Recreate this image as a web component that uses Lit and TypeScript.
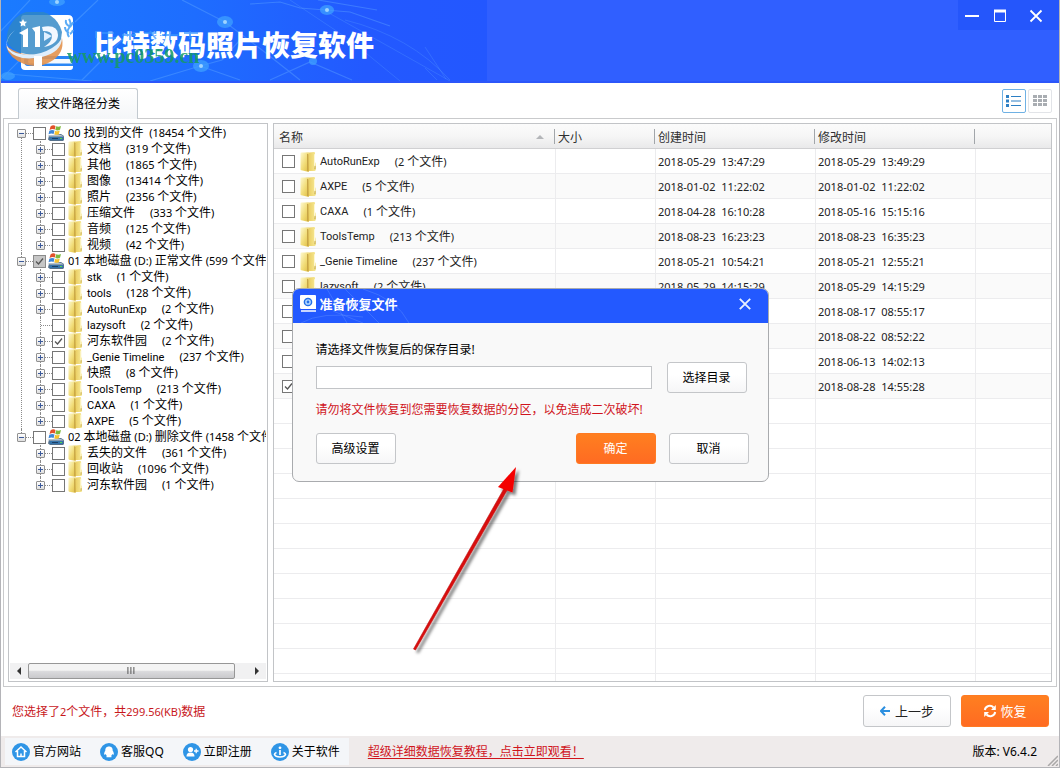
import { LitElement, html, svg, css } from "lit";
import { customElement, state } from "lit/decorators.js";
import { classMap } from "lit/directives/class-map.js";

interface TreeNode {
  name: string;
  count: string;
  checked?: boolean;
  leaf?: boolean;
}
interface TreeRoot {
  label: string;
  partial?: boolean;
  children: TreeNode[];
}
interface FileRow {
  name: string;
  count: string;
  created: string;
  modified: string;
  checked?: boolean;
}

const TREE: TreeRoot[] = [
  {
    label: "00 找到的文件  (18454 个文件)",
    children: [
      { name: "文档", count: "319" },
      { name: "其他", count: "1865" },
      { name: "图像", count: "13414" },
      { name: "照片", count: "2356" },
      { name: "压缩文件", count: "333" },
      { name: "音频", count: "125" },
      { name: "视频", count: "42" },
    ],
  },
  {
    label: "01 本地磁盘 (D:) 正常文件 (599 个文件)",
    partial: true,
    children: [
      { name: "stk", count: "1" },
      { name: "tools", count: "128" },
      { name: "AutoRunExp", count: "2" },
      { name: "lazysoft", count: "2", leaf: true },
      { name: "河东软件园", count: "2", checked: true },
      { name: "_Genie Timeline", count: "237" },
      { name: "快照", count: "8" },
      { name: "ToolsTemp", count: "213" },
      { name: "CAXA", count: "1" },
      { name: "AXPE", count: "5" },
    ],
  },
  {
    label: "02 本地磁盘 (D:) 删除文件 (1458 个文件)",
    children: [
      { name: "丢失的文件", count: "361" },
      { name: "回收站", count: "1096" },
      { name: "河东软件园", count: "1" },
    ],
  },
];

const ROWS: FileRow[] = [
  { name: "AutoRunExp", count: "2", created: "2018-05-29  13:47:29", modified: "2018-05-29  13:49:29" },
  { name: "AXPE", count: "5", created: "2018-01-02  11:22:02", modified: "2018-01-02  11:22:02" },
  { name: "CAXA", count: "1", created: "2018-04-28  16:10:28", modified: "2018-05-16  15:15:16" },
  { name: "ToolsTemp", count: "213", created: "2018-08-23  16:23:23", modified: "2018-08-23  16:35:23" },
  { name: "_Genie Timeline", count: "237", created: "2018-05-21  10:54:21", modified: "2018-05-21  12:55:21" },
  { name: "lazysoft", count: "2", created: "2018-05-29  14:15:29", modified: "2018-05-29  14:15:29" },
  { name: "stk", count: "1", created: "2018-08-17  08:55:17", modified: "2018-08-17  08:55:17" },
  { name: "tools", count: "128", created: "2018-08-22  08:52:22", modified: "2018-08-22  08:52:22" },
  { name: "快照", count: "8", created: "2018-06-13  14:02:13", modified: "2018-06-13  14:02:13" },
  { name: "河东软件园", count: "2", created: "2018-08-28  14:55:28", modified: "2018-08-28  14:55:28", checked: true },
];

const BLANK_ROWS = Array.from({ length: 12 });

/** Latin runs are set one pixel smaller than the Han characters around them. */
const mix = (text: string) =>
  text
    .split(/([\u3000-\u9fff\uff00-\uffef]+)/)
    .filter(Boolean)
    .map((run) => (/[\u3000-\uffef]/.test(run) ? run : html`<span class="latin">${run}</span>`));

const folder = html`<svg class="folder" viewBox="0 0 16 18" preserveAspectRatio="none" aria-hidden="true">
  <defs>
    <linearGradient id="fa" x1="0" x2="1" y1="0" y2="1">
      <stop offset="0" stop-color="#fdf8cf" /><stop offset=".5" stop-color="#f2de7c" /><stop offset="1" stop-color="#dfbb3e" />
    </linearGradient>
    <linearGradient id="fb" x1="0" x2="1">
      <stop offset="0" stop-color="#c9a63c" /><stop offset=".4" stop-color="#ecd168" /><stop offset="1" stop-color="#f7e995" />
    </linearGradient>
  </defs>
  <path d="M5 1 14 0q1 0 1 1v8l.8 1.500V16q0 1-1 1H6z" fill="url(#fb)" />
  <path d="M14.500 2v12" stroke="#fffbe0" stroke-width=".8" />
  <path d="M15 12.500v3" stroke="#b8952f" stroke-width=".8" />
  <path d="M.5 1.500q0-1 1-1H8q1 0 1 1V17q0 1-1 .8L1.300 16.500q-.8-.2-.8-1z" fill="url(#fa)" />
  <path d="M7 1.500q1.500 0 1.500 1V17.500L7 17z" fill="#c7a546" />
</svg>`;

const drive = html`<svg class="drive" viewBox="0 0 16 16" aria-hidden="true">
  <path d="M1 10.500 13 9l3 2v4l-1 1H2L0 14.500z" fill="#56718c" />
  <path d="M0 10h13l3 1.500H1.500z" fill="#b4c3cf" />
  <path d="M1.500 12H15v3H2z" fill="#3574ab" />
  <path d="M4 13h6v1H4z" fill="#1c3f66" /><path d="M12 13h2v1h-2z" fill="#58d84a" />
  <path d="M2.500 1.500Q5-.5 7.500 1L6.800 4.500Q4.500 3.300 1.500 5z" fill="#e2512a" />
  <path d="M8.200 1.300Q10.500 2.400 13 1L12 4.700Q9.500 6 7.300 4.800z" fill="#7fb93c" />
  <path d="M1.300 5.800Q4 4.300 6.500 5.500L5.600 9Q3.500 8 .5 9.200z" fill="#3d86d8" />
  <path d="M7.200 5.700Q9.500 6.800 11.800 5.600L10.800 9.200Q8.500 10.300 6.300 9.200z" fill="#f6c22e" />
</svg>`;

@customElement("app-root")
export class AppRoot extends LitElement {
  @state() private view: "list" | "grid" = "list";

  static styles = css`
    :host {
      display: flex;
      flex-direction: column;
      position: relative;
      box-sizing: border-box;
      height: 100vh;
      overflow: hidden;
      border: 1px solid #b4b4b8;
      border-top: 0;
      background: #fff;
      color: #000;
      font: 12px/16px "Noto Sans", "Noto Sans CJK SC", sans-serif;
    }
    *, *::before, *::after { box-sizing: border-box; }
    button, input { font: inherit; color: inherit; margin: 0; padding: 0; }
    button { cursor: pointer; }
    .latin { font-size: 11px; }
    .name { font-family: Roboto, "Noto Sans CJK SC", sans-serif; }

    .banner {
      flex: none;
      display: flex;
      justify-content: space-between;
      height: 83px;
      background: #305fff;
      border-bottom: 2px solid #2c56fa;
      margin: 0 -1px;
    }
    .brand {
      position: relative;
      display: flex;
      align-items: center;
      width: 487px;
      padding: 6px 0 0 94px;
      background: linear-gradient(90deg, #1a7bff 0, #1e6dff 40%, #2359ff 75%, #2357ff 100%);
    }
    .brand h1 {
      position: relative;
      margin: 0;
      color: #fff;
      font: 900 28px/32px "Noto Sans CJK SC", sans-serif;
      white-space: nowrap;
    }
    .circuit { position: absolute; inset: 0; width: 100%; height: 100%; }
    .mark { position: absolute; left: 4px; top: 12px; width: 220px; height: 60px; }
    .site {
      position: absolute;
      left: 67px;
      top: 46px;
      color: #169a64;
      font: bold 20px/20px "Liberation Serif", serif;
      opacity: 0.85;
    }
    .window-controls {
      display: flex;
      height: 30px;
      padding: 1px 10px 0 0;
      background: #2556fb;
    }
    .window-controls button { width: 28px; border: 0; background: none; }
    .window-controls button:last-child { width: 36px; padding-left: 8px; }
    .window-controls svg { display: block; margin: auto; }

    .tabs {
      flex: none;
      display: flex;
      justify-content: space-between;
      align-items: flex-end;
      height: 35px;
      padding: 0 7px 0 17px;
    }
    .tab {
      position: relative;
      z-index: 1;
      height: 31px;
      margin-bottom: -1px;
      width: 120px;
      border: 1px solid #c3cad0;
      border-bottom: 0;
      border-radius: 3px 3px 0 0;
      background: linear-gradient(#fff, #f4f6f8);
    }
    .views { display: flex; gap: 2px; padding-bottom: 5px; }
    .views button {
      display: grid;
      place-items: center;
      width: 24px;
      height: 24px;
      border: 1px solid #e2e4e8;
      border-radius: 2px;
      background: #fff;
    }
    .views button.active { border-color: #6fb1e4; }
    .views svg { display: block; }

    .panel {
      flex: 1;
      min-height: 0;
      display: flex;
      gap: 5px;
      margin: 0 2px;
      padding: 4px;
      border: 1px solid #c9cacc;
    }
    .tree-box {
      flex: none;
      width: 260px;
      display: flex;
      flex-direction: column;
      border: 1px solid #c2c4c7;
      padding: 1px;
    }
    .tree { flex: 1; min-height: 0; overflow: hidden; margin: 0; padding: 0 0 0 7px; list-style: none; }
    .tree ul { margin: 0; padding: 0 0 0 19px; list-style: none; }
    .tree li { position: relative; }
    .tree li::before {
      content: "";
      position: absolute;
      left: 4px;
      top: 0;
      bottom: 0;
      border-left: 1px dotted #8b8b8b;
    }
    .tree > li:first-child::before { top: 8px; }
    .tree li:last-child::before { bottom: auto; height: 8px; }
    .node {
      position: relative;
      display: flex;
      align-items: center;
      height: 16px;
      white-space: pre;
    }
    .node::before {
      content: "";
      position: absolute;
      left: 5px;
      top: 8px;
      width: 11px;
      border-top: 1px dotted #8b8b8b;
    }
    .node label { display: flex; align-items: center; white-space: pre; }
    .twist {
      position: relative;
      flex: none;
      width: 9px;
      height: 9px;
      border: 1px solid #919191;
      border-radius: 1px;
      background:
        linear-gradient(#3c5a9a, #3c5a9a) center / 5px 1px no-repeat,
        linear-gradient(#fff, #dfdfdf);
      margin-right: 7px;
    }
    .twist.closed {
      background:
        linear-gradient(#3c5a9a, #3c5a9a) center / 5px 1px no-repeat,
        linear-gradient(#3c5a9a, #3c5a9a) center / 1px 5px no-repeat,
        linear-gradient(#fff, #dfdfdf);
    }
    .twist.none { visibility: hidden; }
    .check {
      appearance: none;
      flex: none;
      width: 13px;
      height: 13px;
      border: 1px solid #767676;
      background: #fff;
    }
    .check:checked, .check.partial {
      background: #fff url("data:image/svg+xml,%3Csvg xmlns='http://www.w3.org/2000/svg' viewBox='0 0 11 11'%3E%3Cpath d='M2 5.500 4.500 8 9 2.500' fill='none' stroke='%23555' stroke-width='1.3'/%3E%3C/svg%3E") center / 11px 11px no-repeat;
    }
    .check.partial { background-color: #c6c6c6; border-color: #8b8b8b; }
    .drive { width: 16px; height: 16px; margin: 0 4px 0 2px; }
    .folder { flex: none; width: 14px; height: 16px; margin: 0 5px 0 3px; }
    .count { margin-left: 15px; }

    .hscroll {
      flex: none;
      display: flex;
      height: 16px;
      background: #f1f1f2;
      margin-bottom: 1px;
    }
    .hscroll button { border: 0; background: none; width: 18px; display: grid; place-items: center; }
    .hscroll .thumb-track { flex: 1; display: flex; }
    .hscroll .thumb {
      width: 94%;
      border: 1px solid #979797;
      border-radius: 2px;
      background: linear-gradient(#f4f4f4 0 45%, #dcdcde 50%, #c9c9cc);
    }

    .list-box { flex: 1; min-width: 0; overflow: hidden; border: 1px solid #c2c4c7; }
    table { width: 100%; border-collapse: separate; border-spacing: 0; table-layout: fixed; color: #222; }
    .c-name { width: 282px; }
    .c-size { width: 100px; }
    .c-date { width: 160px; }
    th {
      position: relative;
      height: 25px;
      padding: 4px 2px 0;
      text-align: left;
      font-weight: 400;
      color: #303030;
      background: linear-gradient(#fbfbfb, #f6f6f6 50%, #e9e9ea);
      border-bottom: 1px solid #d0d0d2;
    }
    th:first-child { padding-left: 5px; }
    th:not(:last-child)::after {
      content: "";
      position: absolute;
      right: 1px;
      top: 5px;
      height: 15px;
      border-right: 1px solid #a2a6aa;
    }
    .sort {
      position: absolute;
      right: 12px;
      top: 11px;
      border: 4px solid transparent;
      border-top: 0;
      border-bottom-color: #b4b6b9;
    }
    td {
      height: 25px;
      padding: 1px 2px 0;
      white-space: pre;
      border-bottom: 1px solid #ececee;
      border-right: 1px solid #ececee;
    }
    td:last-child { border-right: 0; }
    .shaded td { background: #fafafa; }
    .file { display: flex; align-items: center; padding-left: 6px; }
    .file .folder { width: 16px; height: 20px; margin: 0 4px 0 5px; }

    .actions {
      flex: none;
      display: flex;
      align-items: flex-start;
      gap: 10px;
      height: 49px;
      padding: 8px 10px 0 11px;
    }
    .picked { flex: 1; margin: 0; padding-top: 9px; color: #c8171c; }
    .btn {
      display: flex;
      align-items: center;
      justify-content: center;
      height: 31px;
      width: 80px;
      padding-top: 2px;
      border: 1px solid #c4c6c9;
      border-radius: 3px;
      background: linear-gradient(#fff, #fff 40%, #f6f6f7);
    }
    .primary { border-color: #ff7a22; background: linear-gradient(#ff7f20, #ff6b22); color: #fff; }
    .actions .btn { width: 88px; height: 32px; padding-top: 0; gap: 5px; font-size: 13px; color: #222; }
    .actions .primary { color: #fff; gap: 3px; }

    .status {
      flex: none;
      display: flex;
      align-items: center;
      height: 31px;
      padding: 0 22px 0 4px;
      background: #efebeb;
      position: relative;
    }
    .links {
      display: flex;
      align-items: center;
      gap: 19px;
      height: 27px;
      padding: 0 9px 0 7px;
      background: #f4f6f9;
      margin-right: 19px;
    }
    .links a { display: flex; align-items: center; gap: 3px; color: #000; text-decoration: none; }
    .links svg { width: 18px; height: 18px; }
    .promo { color: #d0141c; text-decoration: underline; text-underline-offset: 2px; }
    .version { margin-left: auto; }
    .grip { position: absolute; right: 1px; bottom: 1px; }

    .overlay { position: absolute; inset: 0; display: grid; place-items: center; pointer-events: none; padding-top: 2px; }
    .dialog {
      pointer-events: auto;
      width: 477px;
      border: 1px solid #a9abae;
      border-radius: 7px;
      background: #f9f9f9;
      overflow: hidden;
    }
    .dialog-head {
      position: relative;
      display: flex;
      align-items: center;
      gap: 3px;
      height: 34px;
      padding: 0 14px 4px 7px;
      background: #2359ff;
      color: #fff;
    }
    .dialog-head h2 { flex: 1; margin: 0; font: 700 13px/16px "Noto Sans CJK SC", sans-serif; }
    .dialog-head button { display: grid; place-items: center; width: 18px; height: 18px; border: 0; background: none; }
    .dialog-head .webbing { position: absolute; left: 0; top: 0; }
    .dialog-body { padding: 19px 19px 17px 23px; }
    .field { display: flex; align-items: center; gap: 15px; padding-right: 2px; margin: 4px 0 9px; }
    .field input { flex: 1; min-width: 0; height: 23px; border: 1px solid #c2c4c7; background: #fff; padding: 0 4px; }
    .ask { display: block; }
    .warn { margin: 0 0 15px; color: #d0141c; }
    .buttons { display: flex; gap: 13px; }
    .buttons .btn:first-child { margin-right: auto; }
    .pointer { position: absolute; left: 404px; top: 460px; width: 125px; height: 200px; pointer-events: none; }
  `;

  private banner() {
    return html`<header class="banner">
      <div class="brand">
        <svg class="circuit" viewBox="0 0 487 81" preserveAspectRatio="none" aria-hidden="true">
          <g fill="none" stroke="#6db4ff" stroke-opacity=".35" stroke-width="1.200">
            <path d="M0 32 30 0M0 80 28 52M8 74 92 81M82 80 130 32 150 34M75 22 98 0M182 0 225 22 262 50 300 80M250 4 280 2 300 8 350 12 390 26M318 0 377 10M150 81 200 66 222 60 240 40M200 66 240 80M270 80 310 62 352 80" />
          </g>
          <path d="M290 0 350 40 400 81M320 8 395 50 450 81M345 20Q410 36 450 80M425 47 446 79M425 68 437 80" fill="none" stroke="#6db4ff" stroke-opacity=".22" />
          <g fill="#3fa0ff" fill-opacity=".75">
            <ellipse cx="57" cy="2" rx="8" ry="4" /><ellipse cx="225" cy="22" rx="8" ry="6" />
            <ellipse cx="327" cy="10" rx="7" ry="5" /><ellipse cx="201" cy="66" rx="8" ry="6" />
            <ellipse cx="8" cy="76" rx="7" ry="4" /><circle cx="313" cy="61" r="4" />
          </g>
          <g fill="#9ed4ff"><circle cx="57" cy="2" r="2" /><circle cx="225" cy="22" r="2" /><circle cx="327" cy="10" r="2" /><circle cx="201" cy="66" r="2" /></g>
        </svg>
        <h1>比特数码照片恢复软件</h1>
        <svg class="mark" viewBox="0 0 220 60" aria-hidden="true">
          <path d="M20 3h44q5 0 5 5v47q0 3-3 3H21q-4 0-4-4V7q0-4 3-4z" fill="#fff" />
          <path d="M22 44h47v10H24q-4 0-4-5t4-5z" fill="#2a86f5" />
          <path d="M25 47h43v4.500H25q-2-2 0-4.500z" fill="#f4f9ff" />
          <path d="M65 7q3 5 0 9t0 9M62 8q-1 4 3 6M61 15q0 4 4 6M69 10q-1 3-3 5M69 18q-1 3-3 4" stroke="#5cacf6" stroke-width="2" fill="none" />
          <path d="M3 30A28 28 0 0 1 58 20L56 34Q44 42 30 43 10 42 3 30z" fill="#2f86c4" fill-opacity=".82" />
          <path d="M2 34Q20 46 36 42 53 37 58 26 61 42 46 50 34 57 20 52 5 46 2 34z" fill="#e3924e" fill-opacity=".9" />
          <path d="M11 18Q-6 34 12 41 32 46 48 36 56 31 58 25 58 40 38 45 14 50 4 38-1 28 11 18z" fill="#dfeefc" />
          <path d="M15 21l9-5v19h-5V23zM28 16l8-2v21h-5V20zM30 44h8v12h-8z" fill="#fff" />
          <path d="M38 15q16-3 16 8 0 9-14 12 8-5 8-11 0-5-9-5z" fill="#f3f8ff" />
          <path d="M40 20l8 4-8 5z" fill="#dff0ff" />
          <path d="M19 7l1.200 2.500 2.800.3-2 2 .5 2.700-2.500-1.300-2.500 1.300.5-2.700-2-2 2.800-.3z" fill="#fff" />
          <path d="M92 19v7M98 21h12M104 26h8M118 23h14M126 19v9M140 21h12M146 19l6 8M158 23h16M166 19v9M180 21h14M186 19v8" stroke="#3796ff" stroke-width="2" opacity=".7" fill="none" />
        </svg>
        <span class="site">www.pc0359.cn</span>
      </div>
      <div class="window-controls">
        <button aria-label="最小化"><svg width="14" height="14"><path d="M0 7h14" stroke="#fff" stroke-width="2" /></svg></button>
        <button aria-label="最大化"><svg width="14" height="14"><path d="M1.500 1.500h11v11h-11z" fill="none" stroke="#fff" /><path d="M1 2h12" stroke="#fff" stroke-width="3" /></svg></button>
        <button aria-label="关闭"><svg width="14" height="14"><path d="M1.500 1.500l11 11m0-11l-11 11" stroke="#fff" stroke-width="1.800" /></svg></button>
      </div>
    </header>`;
  }

  private tabs() {
    return html`<nav class="tabs">
      <button class="tab">按文件路径分类</button>
      <div class="views">
        <button class=${classMap({ active: this.view === "list" })} aria-label="列表" @click=${() => (this.view = "list")}>
          <svg width="16" height="12"><path d="M0 0h3v3H0zM0 4.500h3v3H0zM0 9h3v3H0z" fill="#2c7fc4" /><path d="M5 1.500h10M5 6h10M5 10.500h10" stroke="#2c7fc4" /></svg>
        </button>
        <button class=${classMap({ active: this.view === "grid" })} aria-label="图标" @click=${() => (this.view = "grid")}>
          <svg width="14" height="12">${[0, 5, 10].map((x) => [0, 4, 8].map((y) => svg`<path d="M${x} ${y}h4v3h-4z" fill="#a9adb2" />`))}</svg>
        </button>
      </div>
    </nav>`;
  }

  private tree() {
    return html`<section class="tree-box">
      <ul class="tree">
        ${TREE.map(
          (root) => html`<li>
            <div class="node">
              <button class="twist" aria-label="折叠"></button>
              <label><input type="checkbox" class=${classMap({ check: true, partial: !!root.partial })} />${drive}<span>${mix(root.label)}</span></label>
            </div>
            <ul>
              ${root.children.map(
                (n) => html`<li>
                  <div class="node">
                    <button class=${classMap({ twist: true, closed: true, none: !!n.leaf })} aria-label="展开"></button>
                    <label><input type="checkbox" class="check" .checked=${!!n.checked} />${folder}<span class="name">${mix(n.name)}</span><span class="count">${mix(`(${n.count} 个文件)`)}</span></label>
                  </div>
                </li>`
              )}
            </ul>
          </li>`
        )}
      </ul>
      <div class="hscroll">
        <button aria-label="向左"><svg width="4" height="8"><path d="M4 0v8L0 4z" fill="#333" /></svg></button>
        <div class="thumb-track"><div class="thumb">
          <svg width="100%" height="14" viewBox="0 0 206 14"><path d="M99.500 3v7M102.500 3v7M105.500 3v7" stroke="#555" /></svg>
        </div></div>
        <button aria-label="向右"><svg width="4" height="8"><path d="M0 0v8l4-4z" fill="#333" /></svg></button>
      </div>
    </section>`;
  }

  private list() {
    return html`<section class="list-box">
      <table>
        <colgroup><col class="c-name" /><col class="c-size" /><col class="c-date" /><col class="c-date" /><col /></colgroup>
        <thead>
          <tr><th>名称<span class="sort"></span></th><th>大小</th><th>创建时间</th><th>修改时间</th><th></th></tr>
        </thead>
        <tbody>
          ${ROWS.map(
            (r, i) => html`<tr class=${classMap({ shaded: i % 2 === 1 })}>
              <td><label class="file"><input type="checkbox" class="check" .checked=${!!r.checked} />${folder}<span class="name">${mix(r.name)}</span><span class="count">${mix(`(${r.count} 个文件)`)}</span></label></td>
              <td></td>
              <td>${mix(r.created)}</td>
              <td>${mix(r.modified)}</td>
              <td></td>
            </tr>`
          )}
          ${BLANK_ROWS.map(() => html`<tr><td></td><td></td><td></td><td></td><td></td></tr>`)}
        </tbody>
      </table>
    </section>`;
  }

  private footer() {
    const disc = svg`<circle cx="9" cy="9" r="9" fill="#2f95e6" />`;
    return html`<div class="actions">
        <p class="picked">${mix("您选择了2个文件，共299.56(KB)数据")}</p>
        <button class="btn">
          <svg width="10" height="10"><path d="M5 .8L1 5l4 4.200M1.500 5H10" fill="none" stroke="#2b8fe0" stroke-width="2" /></svg>上一步
        </button>
        <button class="btn primary">
          <svg width="14" height="14" fill="none" stroke="#fff" stroke-width="2"><path d="M1.800 6A5 5 0 0 1 10.500 3.500M12.200 8A5 5 0 0 1 3.500 10.500" /><path d="M12.800 1v5H8zM1.200 13V8H6z" fill="#fff" stroke="none" /></svg>恢复
        </button>
      </div>
      <footer class="status">
        <nav class="links">
          <a href="#site"><svg viewBox="0 0 18 18">${disc}<path d="M3.500 9L9 4l5.500 5M5.500 8v5.500h7V8M9 13.500v-3" fill="none" stroke="#fff" stroke-width="1.500" /></svg>官方网站</a>
          <a href="#qq"><svg viewBox="0 0 18 18">${disc}<path d="M9 3.500c-3 0-3.800 2.200-3.700 4.300-1 1.500-1.500 3-.9 4 .5.300 1-.4 1.300-.8.300 1 .7 1.500 1.300 2-.6.300-.8.800-.4 1.200h4.800c.4-.4.2-.9-.4-1.200.6-.5 1-1 1.300-2 .3.400.8 1.100 1.300.8.600-1 .1-2.500-.9-4C12.800 5.700 12 3.500 9 3.500z" fill="#fff" /></svg>客服QQ</a>
          <a href="#register"><svg viewBox="0 0 18 18">${disc}<circle cx="7.500" cy="6.500" r="2.600" fill="#fff" /><path d="M3.500 13.500q0-4 4-4t4 4z" fill="#fff" /><path d="M11 8h4.500M13.200 5.800v4.500" stroke="#fff" stroke-width="1.300" /></svg>立即注册</a>
          <a href="#about"><svg viewBox="0 0 18 18">${disc}<circle cx="9" cy="4.800" r="1.400" fill="#fff" /><path d="M9 7v5M5.500 9.500q-2 .7-2 2Q4.500 14 9 14t5.500-2.500q0-1.300-2-2" fill="none" stroke="#fff" stroke-width="1.700" /></svg>关于软件</a>
        </nav>
        <a class="promo" href="#guide">超级详细数据恢复教程，点击立即观看！</a>
        <span class="version">版本: V6.4.2</span>
        <svg class="grip" width="12" height="12" aria-hidden="true"><path d="M2 12L12 2M6 12l6-6M10 12l2-2" stroke="#aaa8a8" stroke-width="1.500" /></svg>
      </footer>`;
  }

  private dialog() {
    return html`<div class="overlay">
      <section class="dialog" role="dialog" aria-labelledby="dlg-title">
        <header class="dialog-head">
          <svg class="webbing" width="140" height="34" aria-hidden="true"><path d="M34 0l20 34M52 0l34 34M70 0q34 10 46 34M40 22l30 12M8 34q20-12 62-6" fill="none" stroke="#6d9cff" stroke-opacity=".35" /></svg>
          <svg width="17" height="17" viewBox="0 0 17 17" aria-hidden="true"><path d="M1 0h14q1 0 1 1v13H1.500Q0 14 0 13V1q0-1 1-1z" fill="#fff" /><path d="M1 16h15" stroke="#fff" stroke-width="1.500" /><circle cx="8" cy="7" r="3.600" fill="#b8dcff" stroke="#2470e8" stroke-width="1.500" /><circle cx="8" cy="7" r="1.400" fill="#2470e8" /></svg>
          <h2 id="dlg-title">准备恢复文件</h2>
          <button aria-label="关闭"><svg width="12" height="12"><path d="M.8.8l10.400 10.400m0-10.400L.8 11.200" stroke="#e8f0ff" stroke-width="1.900" /></svg></button>
        </header>
        <div class="dialog-body">
          <label class="ask" for="target">请选择文件恢复后的保存目录!</label>
          <div class="field"><input id="target" type="text" /><button class="btn">选择目录</button></div>
          <p class="warn">请勿将文件恢复到您需要恢复数据的分区，以免造成二次破坏!</p>
          <div class="buttons">
            <button class="btn">高级设置</button>
            <button class="btn primary">确定</button>
            <button class="btn">取消</button>
          </div>
        </div>
      </section>
    </div>`;
  }

  render() {
    return html`
      ${this.banner()}
      ${this.tabs()}
      <main class="panel">${this.tree()}${this.list()}</main>
      ${this.footer()}
      ${this.dialog()}
      <svg class="pointer" viewBox="0 0 125 200" aria-hidden="true">
        <defs><filter id="sh" x="-20%" y="-20%" width="140%" height="140%"><feDropShadow dx="3" dy="3" stdDeviation="1.500" flood-color="#000" flood-opacity=".5" /></filter></defs>
        <g filter="url(#sh)">
          <path d="M8.500 189l2 1L104.500 26l-3-2z" fill="#d8090c" stroke="#c01010" stroke-width=".6" />
          <path d="M111 7L93 27l14.500 5.500z" fill="#f40000" />
        </g>
      </svg>
    `;
  }
}
